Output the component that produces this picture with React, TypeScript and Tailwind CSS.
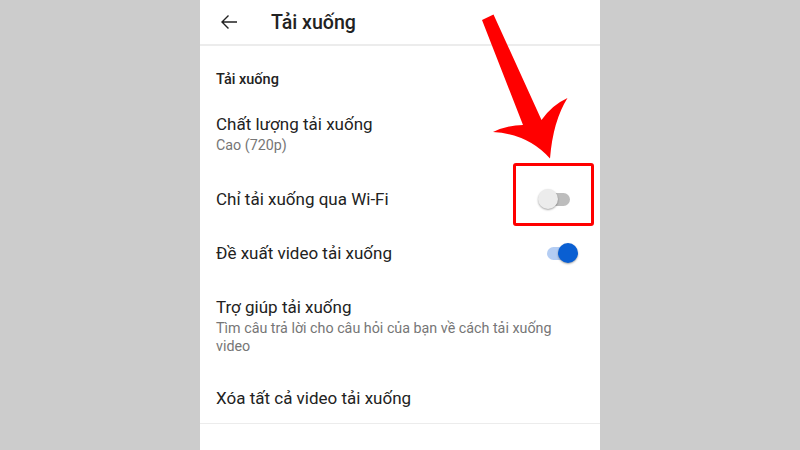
import React from "react";

function Toggle({ on }: { on: boolean }) {
  return (
    <div className="relative w-[40px] h-[20px]">
      <div
        className={
          on
            ? "absolute left-[9px] top-[3.5px] w-[23px] h-[13px] rounded-full bg-[#b4cdf3]"
            : "absolute left-[9px] top-[3.5px] w-[23px] h-[13px] rounded-full bg-[#bdbdbd]"
        }
      />
      <div
        className={
          on
            ? "absolute left-[20px] top-0 w-[20px] h-[20px] rounded-full bg-[#0a5fd2] shadow-[0_1px_2px_rgba(0,0,0,0.35)]"
            : "absolute left-0 top-0 w-[20px] h-[20px] rounded-full bg-[#ececec] shadow-[0_1px_2px_rgba(0,0,0,0.35)]"
        }
      />
    </div>
  );
}

export default function App() {
  return (
    <div
      className="relative w-[800px] h-[450px] bg-[#cccccc] flex justify-center overflow-hidden"
      style={{ fontFamily: "Roboto, 'Noto Sans', sans-serif" }}
    >
      <div className="w-[400px] h-full bg-white flex flex-col text-[#222222]">
        {/* header */}
        <div className="h-[46px] flex items-center border-b-2 border-[#ececec] shrink-0">
          <div className="w-[71px] pl-[19px] flex items-center">
            <svg width="20" height="20" viewBox="0 0 20 20" fill="none">
              <path d="M18 10H3M9.5 3.5L3 10l6.5 6.5" stroke="#222222" strokeWidth="1.4" />
            </svg>
          </div>
          <div className="text-[19.6px] font-medium leading-[24px] mt-[1px]">Tải xuống</div>
        </div>

        {/* section header */}
        <div className="pl-[16px] pt-[24px] pb-[4px] text-[14.5px] font-medium leading-[20px]">Tải xuống</div>

        {/* item 1 */}
        <div className="pl-[16px] pt-[19px] pb-[17px] flex flex-col">
          <div className="text-[17px] leading-[22px]">Chất lượng tải xuống</div>
          <div className="text-[14.3px] leading-[20px] text-[#767676]">Cao (720p)</div>
        </div>

        {/* item 2 */}
        <div className="h-[54px] pl-[16px] pr-[22px] flex items-center justify-between">
          <div className="text-[17px] leading-[24px]">Chỉ tải xuống qua Wi-Fi</div>
          <Toggle on={false} />
        </div>

        {/* item 3 */}
        <div className="h-[54px] pl-[16px] pr-[22px] flex items-center justify-between">
          <div className="text-[17px] leading-[24px]">Đề xuất video tải xuống</div>
          <Toggle on={true} />
        </div>

        {/* item 4 */}
        <div className="pl-[16px] pr-[16px] pt-[15px] pb-[17px] flex flex-col">
          <div className="text-[17px] leading-[24px]">Trợ giúp tải xuống</div>
          <div className="text-[14.3px] leading-[18px] text-[#767676] w-[360px]">
            Tìm câu trả lời cho câu hỏi của bạn về cách tải xuống video
          </div>
        </div>

        {/* item 5 */}
        <div className="h-[52px] pl-[16px] flex items-center border-b border-[#ececec]">
          <div className="text-[17px] leading-[24px]">Xóa tất cả video tải xuống</div>
        </div>
      </div>

      {/* red highlight box */}
      <div className="absolute left-[513px] top-[163px] w-[81px] h-[63px] border-[3px] border-[#ff0000] rounded-[3px]" />

      {/* red arrow */}
      <svg className="absolute left-0 top-0 pointer-events-none" width="800" height="450" viewBox="0 0 800 450">
        <path
          d="M482 20 L493.5 14.5 L541.5 120 Q552 105 567.5 98 Q553 121 550 158.5 Q528 134 493 132 Q508 125 523 125 Z"
          fill="#ff0000"
        />
      </svg>
    </div>
  );
}
